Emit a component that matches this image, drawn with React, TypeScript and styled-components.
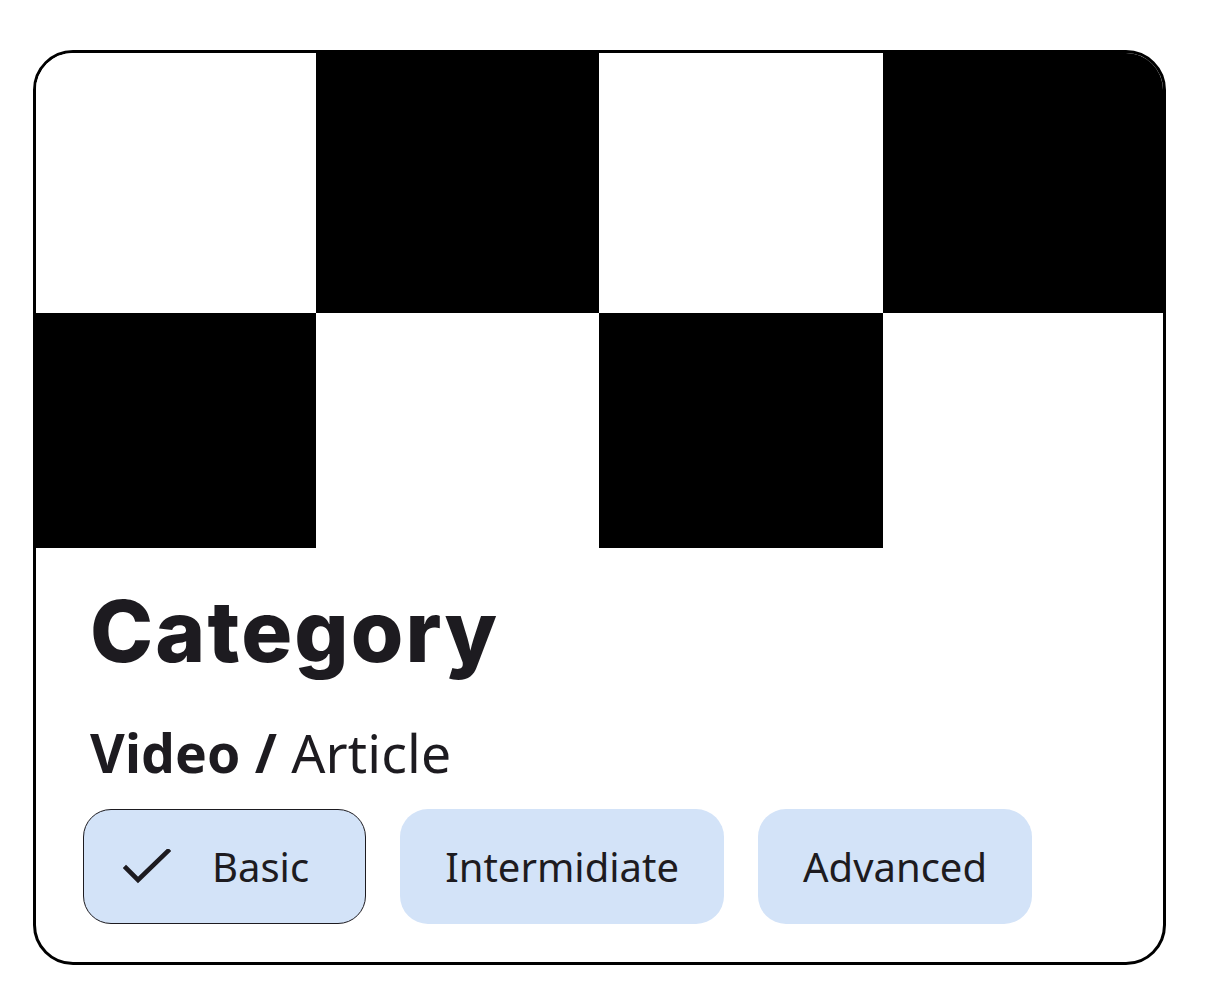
import React from "react";
import styled, { createGlobalStyle } from "styled-components";

const Global = createGlobalStyle`
  html, body { margin: 0; padding: 0; background: #ffffff; }
  body { font-family: "Noto Sans", "Open Sans", sans-serif; }
`;

const Page = styled.div`
  padding: 50px 40px 0 33px;
`;

const Card = styled.div`
  width: 1133px;
  height: 915px;
  box-sizing: border-box;
  border: 3px solid #000000;
  border-radius: 40px;
  overflow: hidden;
  background: #ffffff;
  display: flex;
  flex-direction: column;
`;

const Media = styled.div`
  display: grid;
  grid-template-columns: 280px 283px 284px 280px;
  grid-template-rows: 260px 235px;
  flex: none;
`;

const Cell = styled.div<{ $dark: boolean }>`
  background: ${(p) => (p.$dark ? "#000000" : "#ffffff")};
`;

const Body = styled.div`
  display: flex;
  flex-direction: column;
  padding: 32px 54px 0 54px;
`;

const Title = styled.h1`
  margin: 0;
  font-family: Inter, "Noto Sans", sans-serif;
  font-weight: 800;
  font-size: 85px;
  letter-spacing: 2.1px;
  line-height: 104px;
  color: #1d1b20;
`;

const Subtitle = styled.p`
  margin: 37px 0 0 0;
  font-family: "Noto Sans", "Open Sans", sans-serif;
  font-size: 53.5px;
  letter-spacing: 0.15px;
  line-height: 64px;
  color: #1d1b20;
`;

const Strong = styled.span`
  font-weight: 700;
`;

const Chips = styled.div`
  display: flex;
  gap: 34px;
  margin: 24px 0 0 -7px;
`;

const Chip = styled.button<{ $selected?: boolean }>`
  display: flex;
  align-items: center;
  gap: 41px;
  height: 115px;
  box-sizing: border-box;
  padding: ${(p) => (p.$selected ? "0 56px 0 39px" : "0 44px")};
  border-radius: 28px;
  border: ${(p) => (p.$selected ? "1.5px solid #1d1b20" : "1.5px solid transparent")};
  background: #d3e3f8;
  font-family: "Noto Sans", "Open Sans", sans-serif;
  font-size: 40px;
  color: #1d1b20;
  cursor: pointer;
`;

const Check = () => (
  <svg width="48" height="36" viewBox="0 0 48 36" fill="none">
    <path d="M3 19 L15 31 L45 2" stroke="#1d1b20" strokeWidth="4.6" strokeLinecap="square" />
  </svg>
);

const pattern = [false, true, false, true, true, false, true, false];

export default function App() {
  return (
    <>
      <Global />
      <Page>
        <Card>
          <Media>
            {pattern.map((d, i) => (
              <Cell key={i} $dark={d} />
            ))}
          </Media>
          <Body>
            <Title>Category</Title>
            <Subtitle>
              <Strong>Video /</Strong> Article
            </Subtitle>
            <Chips>
              <Chip $selected>
                <Check />
                Basic
              </Chip>
              <Chip>Intermidiate</Chip>
              <Chip>Advanced</Chip>
            </Chips>
          </Body>
        </Card>
      </Page>
    </>
  );
}
